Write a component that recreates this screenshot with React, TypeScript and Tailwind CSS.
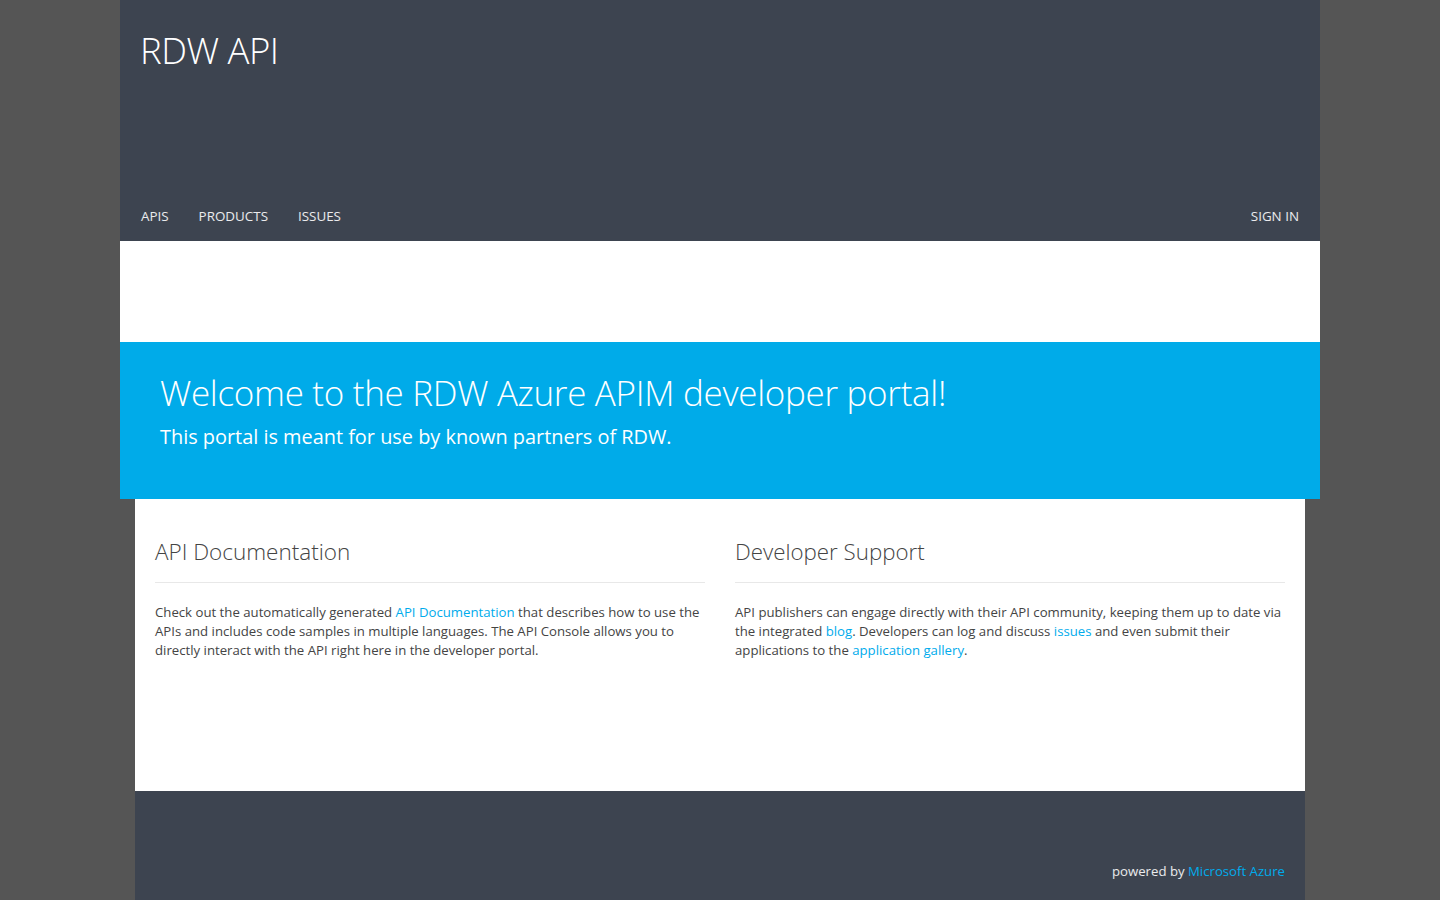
import React from 'react';

const font = { fontFamily: '"Segoe UI", "Open Sans", "Noto Sans", sans-serif' };

const NavLink: React.FC<{ label: string }> = ({ label }) => (
  <a href="#" className="text-[13.4px] text-white/90 uppercase px-[15px] leading-[20px]">{label}</a>
);

const Link: React.FC<{ children: React.ReactNode }> = ({ children }) => (
  <a href="#" className="text-[#00abec]">{children}</a>
);

export default function App() {
  return (
    <div className="min-h-[900px] bg-[#555555]" style={font}>
      <header className="w-[1200px] mx-auto bg-[#3d4450] h-[241px] flex flex-col justify-between">
        <h1 className="text-[36.5px] font-light text-white pl-[20px] pt-[27px] leading-[46px] tracking-[-0.5px]">RDW API</h1>
        <nav className="flex items-center justify-between px-[6px] pb-[15px]">
          <div className="flex">
            <NavLink label="Apis" />
            <NavLink label="Products" />
            <NavLink label="Issues" />
          </div>
          <NavLink label="Sign in" />
        </nav>
      </header>
      <div className="w-[1200px] mx-auto bg-white h-[101px]" />
      <section className="w-[1200px] mx-auto bg-[#00abe9] h-[157px] px-[40px] pt-[29px]">
        <h2 className="text-[35px] font-light text-white leading-[44px] tracking-[-0.3px]">Welcome to the RDW Azure APIM developer portal!</h2>
        <p className="text-[19.9px] text-white leading-[28px] mt-[8px]">This portal is meant for use by known partners of RDW.</p>
      </section>
      <main className="w-[1170px] mx-auto bg-white h-[292px] px-[20px] pt-[37px] grid grid-cols-2 gap-[30px]">
        <div>
          <h3 className="text-[22.5px] font-light text-[#444] leading-[32px]">API Documentation</h3>
          <hr className="border-t border-[#e8e8e8] mt-[14px] mb-[20px]" />
          <p className="text-[13.2px] leading-[19px] text-[#444]">
            Check out the automatically generated <Link>API Documentation</Link> that describes how to use the APIs and includes code samples in multiple languages. The API Console allows you to directly interact with the API right here in the developer portal.
          </p>
        </div>
        <div>
          <h3 className="text-[22.3px] font-light text-[#444] leading-[32px]">Developer Support</h3>
          <hr className="border-t border-[#e8e8e8] mt-[14px] mb-[20px]" />
          <p className="text-[13.2px] leading-[19px] text-[#444]">
            API publishers can engage directly with their API community, keeping them up to date via the integrated <Link>blog</Link>. Developers can log and discuss <Link>issues</Link> and even submit their applications to the <Link>application gallery</Link>.
          </p>
        </div>
      </main>
      <footer className="w-[1170px] mx-auto bg-[#3d4450] h-[109px] flex items-end justify-end px-[20px] pb-[19px]">
        <p className="text-[13.2px] text-white/90 leading-[20px]">powered by <Link>Microsoft Azure</Link></p>
      </footer>
    </div>
  );
}
